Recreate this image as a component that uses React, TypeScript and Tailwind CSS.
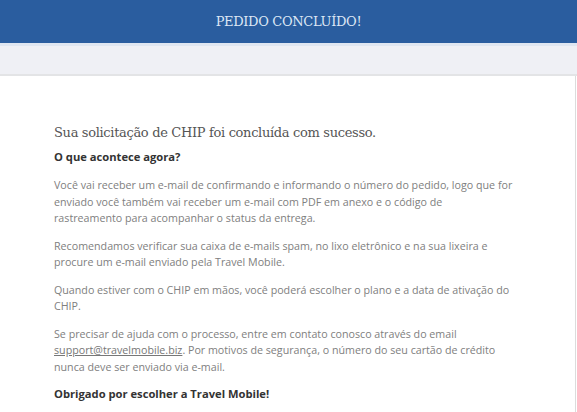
import React from 'react'

const paragraphs = [
    'Recomendamos verificar sua caixa de e-mails spam, no lixo eletrônico e na sua lixeira e procure um e-mail enviado pela Travel Mobile.',
    'Quando estiver com o CHIP em mãos, você poderá escolher o plano e a data de ativação do CHIP.',
]

const App = () => {
    return (
        <div className="w-[577px] h-[412px] overflow-hidden bg-white font-['Open_Sans',sans-serif]">
            {/* Top bar */}
            <div className="h-[43px] bg-[#2a5d9f] flex items-center justify-center">
                <h1 className="font-['DejaVu_Serif',serif] text-[13px] text-[#dde7f5] tracking-tight">
                    PEDIDO CONCLUÍDO!
                </h1>
            </div>
            <div className="h-[3px] bg-[#dfe6f1]"></div>
            <div className="h-[30px] bg-[#eff0f5] border-b-2 border-[#e3e4e6]"></div>

            {/* Card */}
            <div className="mr-[1px] border-r border-[#dcdcdc] h-full pl-[54px] pt-[47px]">
                <div className="w-[465px]">
                    <h2 className="font-['DejaVu_Serif',serif] text-[13px] text-[#555] tracking-tight leading-5">
                        Sua solicitação de CHIP foi concluída com sucesso.
                    </h2>
                    <h3 className="mt-[4px] text-[11.2px] font-bold text-[#333] leading-5">
                        O que acontece agora?
                    </h3>
                    <div className="mt-[10px] text-[10.7px] text-[#808080] leading-[16.5px] flex flex-col gap-[11px]">
                        <p>
                            Você vai receber um e-mail de confirmando e informando o número do pedido, logo que for enviado você também vai receber um e-mail com PDF em anexo e o código de
                            <br />
                            rastreamento para acompanhar o status da entrega.
                        </p>
                        {paragraphs.map((p, i) => (
                            <p key={i}>{p}</p>
                        ))}
                        <p>
                            Se precisar de ajuda com o processo, entre em contato conosco através do email{' '}
                            <a className="underline text-[#777]">support@travelmobile.biz</a>. Por motivos de segurança, o número do seu cartão de crédito nunca deve ser enviado via e-mail.
                        </p>
                        <p className="text-[11.2px] font-bold text-[#333]">
                            Obrigado por escolher a Travel Mobile!
                        </p>
                    </div>
                </div>
            </div>
        </div>
    )
}

export default App
